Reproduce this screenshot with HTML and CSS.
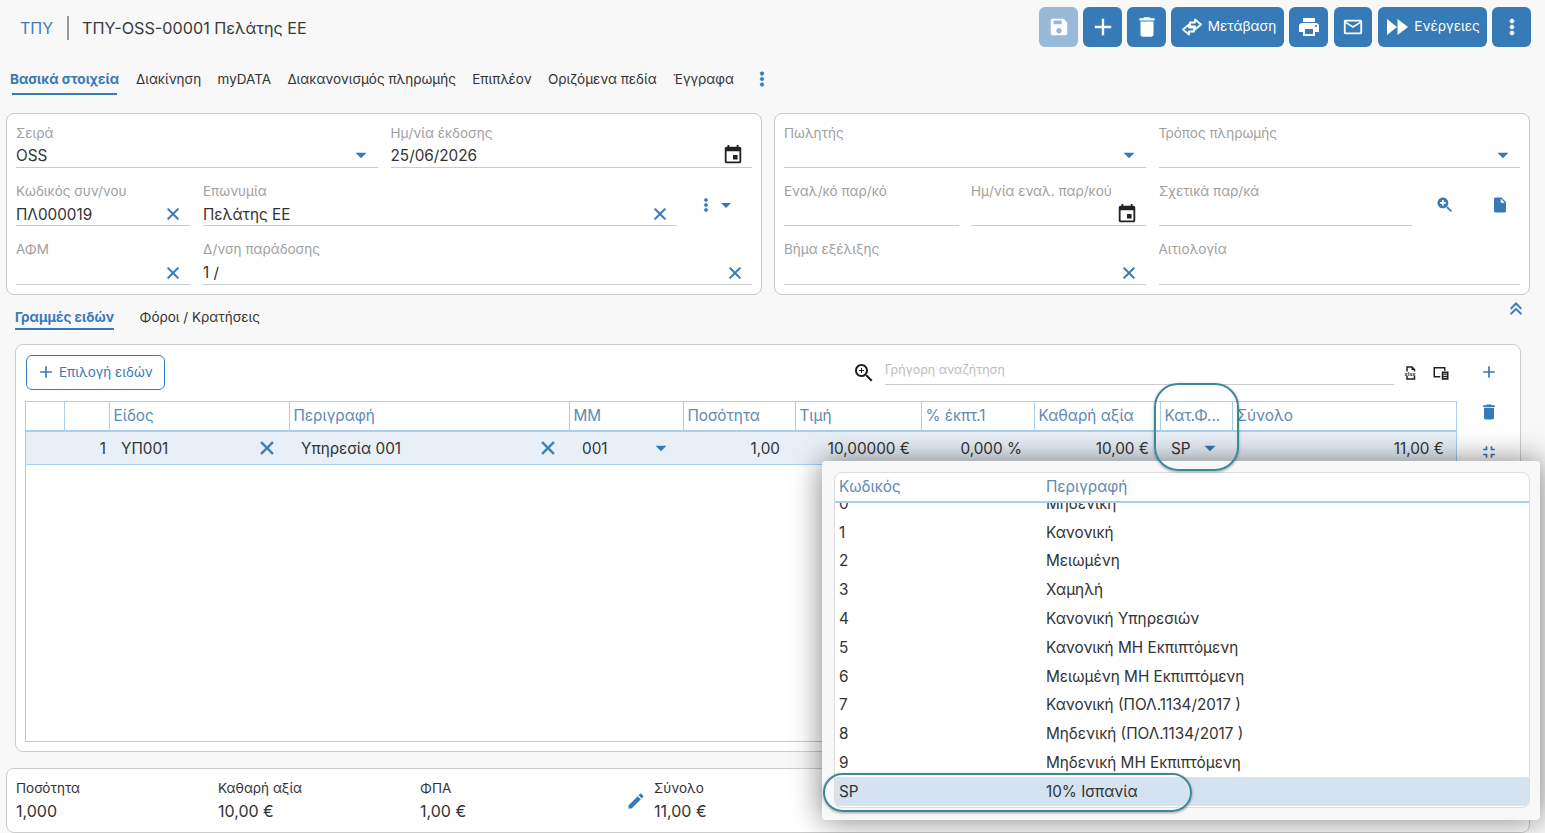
FILE: index.html
```html
<!DOCTYPE html>
<html lang="el">
<head>
  <meta charset="UTF-8">
  <title>ΤΠΥ-OSS-00001 Πελάτης ΕΕ</title>
  <link rel="stylesheet" href="styles.css">
</head>
<body>
  <svg class="sprite" xmlns="http://www.w3.org/2000/svg">
    <symbol id="i-save" viewBox="0 0 24 24"><path d="M17 3H5c-1.11 0-2 .9-2 2v14c0 1.1.89 2 2 2h14c1.1 0 2-.9 2-2V7l-4-4zm-5 16c-1.66 0-3-1.34-3-3s1.34-3 3-3 3 1.34 3 3-1.34 3-3 3zm3-10H6V5h9v4z"/></symbol>
    <symbol id="i-add" viewBox="0 0 24 24"><path d="M19 13h-6v6h-2v-6H5v-2h6V5h2v6h6v2z"/></symbol>
    <symbol id="i-trash" viewBox="0 0 24 24"><path d="M6 19c0 1.1.9 2 2 2h8c1.1 0 2-.9 2-2V7H6v12zM19 4h-3.5l-1-1h-5l-1 1H5v2h14V4z"/></symbol>
    <symbol id="i-swap" viewBox="0 0 20 18"><g fill="none" stroke="currentColor" stroke-width="1.800" stroke-linejoin="round"><path d="M8 4.500h5v-3l6 5-6 5v-3H8z"/><path d="M12 13.500H7v3l-6-5 6-5v3h5z"/></g></symbol>
    <symbol id="i-print" viewBox="0 0 24 24"><path d="M19 8H5c-1.66 0-3 1.34-3 3v6h4v4h12v-4h4v-6c0-1.66-1.34-3-3-3zm-3 11H8v-5h8v5zm3-7c-.55 0-1-.45-1-1s.45-1 1-1 1 .45 1 1-.45 1-1 1zm-1-9H6v4h12V3z"/></symbol>
    <symbol id="i-mail" viewBox="0 0 24 24"><path d="M20 4H4c-1.1 0-1.99.9-1.99 2L2 18c0 1.1.9 2 2 2h16c1.1 0 2-.9 2-2V6c0-1.1-.9-2-2-2zm0 14H4V8l8 5 8-5v10zm-8-7L4 6h16l-8 5z"/></symbol>
    <symbol id="i-forward" viewBox="0 0 24 24"><path d="M2 20l10-8L2 4v16zm10.500-16v16L23 12 12.500 4z"/></symbol>
    <symbol id="i-more" viewBox="0 0 24 24"><path d="M12 8c1.100 0 2-.9 2-2s-.9-2-2-2-2 .9-2 2 .9 2 2 2zm0 2c-1.100 0-2 .9-2 2s.9 2 2 2 2-.9 2-2-.9-2-2-2zm0 6c-1.100 0-2 .9-2 2s.9 2 2 2 2-.9 2-2-.9-2-2-2z" stroke="currentColor" stroke-width=".6"/></symbol>
    <symbol id="i-close" viewBox="0 0 24 24"><path d="M19 6.410L17.590 5 12 10.590 6.410 5 5 6.410 10.590 12 5 17.590 6.410 19 12 13.410 17.590 19 19 17.590 13.410 12z" stroke="currentColor" stroke-width=".7"/></symbol>
    <symbol id="i-caret" viewBox="0 0 24 24"><path d="M6 9.500h12l-6 6z"/></symbol>
    <symbol id="i-event" viewBox="0 0 24 24"><path d="M17 12h-5v5h5v-5zM16 1v2H8V1H6v2H5c-1.110 0-1.990.9-1.990 2L3 19c0 1.100.89 2 2 2h14c1.100 0 2-.9 2-2V5c0-1.100-.9-2-2-2h-1V1h-2zm3 18H5V8h14v11z"/></symbol>
    <symbol id="i-zoom-fill" viewBox="0 0 24 24"><path d="M15.500 14h-.79l-.28-.27C15.410 12.590 16 11.110 16 9.500 16 5.910 13.090 3 9.500 3S3 5.910 3 9.500 5.910 16 9.500 16c1.610 0 3.090-.59 4.230-1.570l.27.28v.79l5 4.990L20.490 19l-4.990-5zM13 10.500h-2.500V13h-2v-2.500H6v-2h2.500V6h2v2.500H13v2z"/></symbol>
    <symbol id="i-zoom" viewBox="0 0 24 24"><path d="M15.500 14h-.79l-.28-.27C15.410 12.590 16 11.110 16 9.500 16 5.910 13.090 3 9.500 3S3 5.910 3 9.500 5.910 16 9.500 16c1.610 0 3.090-.59 4.230-1.570l.27.28v.79l5 4.990L20.490 19l-4.990-5zm-6 0C7.010 14 5 11.990 5 9.500S7.010 5 9.500 5 14 7.010 14 9.500 11.990 14 9.500 14z"/><path d="M12 10h-2v2H9v-2H7V9h2V7h1v2h2v1z"/></symbol>
    <symbol id="i-file" viewBox="0 0 24 24"><path d="M6 2c-1.100 0-1.990.9-1.990 2L4 20c0 1.100.89 2 1.990 2H18c1.100 0 2-.9 2-2V8l-6-6H6zm7 7V3.500L18.500 9H13z"/></symbol>
    <symbol id="i-edit" viewBox="0 0 24 24"><path d="M3 17.250V21h3.750L17.810 9.940l-3.750-3.750L3 17.250zM20.710 7.040c.39-.39.39-1.020 0-1.410l-2.340-2.340c-.39-.39-1.020-.39-1.410 0l-1.830 1.830 3.750 3.750 1.830-1.830z"/></symbol>
    <symbol id="i-double-up" viewBox="0 0 24 24"><path d="M17.590 20L19 18.590l-7-7-7 7L6.410 20 12 14.420 17.590 20zM17.590 13.580L19 12.170l-7-7-7 7 1.410 1.410L12 8l5.590 5.580z" stroke="currentColor" stroke-width=".5"/></symbol>
    <symbol id="i-compress" viewBox="0 0 24 24"><path d="M5 16h3v3h2v-5H5v2zm3-8H5v2h5V5H8v3zm6 11h2v-3h3v-2h-5v5zm2-11V5h-2v5h5V8h-3z"/></symbol>
    <symbol id="i-xlsx" viewBox="0 0 24 24"><path d="M7 3h8l4 4v3h-2V8h-3V5H9v5H7zM7 16h2v3h8v-3h2v5H7z"/><text x="12" y="15.500" text-anchor="middle" font-family="Liberation Sans, sans-serif" font-size="7.500" font-weight="700">xlsx</text></symbol>
    <symbol id="i-copy" viewBox="0 0 24 24"><path d="M2 4h16v5h-2V6H4v10h7v2H2z"/><path d="M13 10h9v11h-9z"/><path fill="#fff" d="M15 12.500h5v1h-5zM15 15h5v1h-5zM15 17.500h5v1h-5z"/></symbol>
  </svg>

  <header class="topbar">
    <div class="crumb">
      <span class="crumb-code">ΤΠΥ</span>
      <span class="crumb-title">ΤΠΥ-OSS-00001 Πελάτης ΕΕ</span>
    </div>
    <div class="actions">
      <button class="btn disabled"><svg class="ico-22"><use href="#i-save"/></svg></button>
      <button class="btn"><svg class="ico-28"><use href="#i-add"/></svg></button>
      <button class="btn"><svg class="ico-26"><use href="#i-trash"/></svg></button>
      <button class="btn wide-go"><svg class="ico-swap"><use href="#i-swap"/></svg><span>Μετάβαση</span></button>
      <button class="btn"><svg class="ico-24"><use href="#i-print"/></svg></button>
      <button class="btn mail"><svg class="ico-22"><use href="#i-mail"/></svg></button>
      <button class="btn wide-act"><svg class="ico-24"><use href="#i-forward"/></svg><span>Ενέργειες</span></button>
      <button class="btn"><svg class="ico-24"><use href="#i-more"/></svg></button>
    </div>
  </header>

  <nav class="tabs">
    <a class="tab active">Βασικά στοιχεία</a>
    <a class="tab">Διακίνηση</a>
    <a class="tab">myDATA</a>
    <a class="tab">Διακανονισμός πληρωμής</a>
    <a class="tab">Επιπλέον</a>
    <a class="tab">Οριζόμενα πεδία</a>
    <a class="tab">Έγγραφα</a>
    <svg class="ico-22 tab-more"><use href="#i-more"/></svg>
  </nav>

  <section class="cards">
    <div class="card">
      <div class="row">
        <div class="field half"><label>Σειρά</label><div class="val top">OSS<svg class="ico-22 blue end"><use href="#i-caret"/></svg></div></div>
        <div class="field half"><label>Ημ/νία έκδοσης</label><div class="val top">25/06/2026<svg class="ico-22 dark end"><use href="#i-event"/></svg></div></div>
      </div>
      <div class="row">
        <div class="field short"><label>Κωδικός συν/νου</label><div class="val low">ΠΛ000019<svg class="ico-20 blue end"><use href="#i-close"/></svg></div></div>
        <div class="field name"><label>Επωνυμία</label><div class="val low">Πελάτης ΕΕ<svg class="ico-20 blue end"><use href="#i-close"/></svg></div></div>
        <div class="field-tools"><svg class="ico-20 blue"><use href="#i-more"/></svg><svg class="ico-20 blue"><use href="#i-caret"/></svg></div>
      </div>
      <div class="row row-last">
        <div class="field short"><label>ΑΦΜ</label><div class="val low"><svg class="ico-20 blue end"><use href="#i-close"/></svg></div></div>
        <div class="field grow"><label>Δ/νση παράδοσης</label><div class="val low">1 /<svg class="ico-20 blue end"><use href="#i-close"/></svg></div></div>
      </div>
    </div>
    <div class="card">
      <div class="row">
        <div class="field half"><label>Πωλητής</label><div class="val top"><svg class="ico-22 blue end"><use href="#i-caret"/></svg></div></div>
        <div class="field half"><label>Τρόπος πληρωμής</label><div class="val top"><svg class="ico-22 blue end"><use href="#i-caret"/></svg></div></div>
      </div>
      <div class="row">
        <div class="field quarter"><label>Εναλ/κό παρ/κό</label><div class="val low"></div></div>
        <div class="field quarter"><label>Ημ/νία εναλ. παρ/κού</label><div class="val low"><svg class="ico-22 dark end"><use href="#i-event"/></svg></div></div>
        <div class="field related"><label>Σχετικά παρ/κά</label><div class="val low"></div></div>
        <div class="field-tools wide"><svg class="ico-20 blue"><use href="#i-zoom-fill"/></svg><svg class="ico-18 blue"><use href="#i-file"/></svg></div>
      </div>
      <div class="row row-last">
        <div class="field half"><label>Βήμα εξέλιξης</label><div class="val low"><svg class="ico-20 blue end"><use href="#i-close"/></svg></div></div>
        <div class="field half"><label>Αιτιολογία</label><div class="val low"></div></div>
      </div>
    </div>
  </section>

  <nav class="subtabs">
    <a class="subtab active">Γραμμές ειδών</a>
    <a class="subtab">Φόροι / Κρατήσεις</a>
    <svg class="ico-20 blue collapse"><use href="#i-double-up"/></svg>
  </nav>

  <section class="lines">
    <div class="lines-main">
      <div class="toolbar">
        <button class="pick"><svg class="ico-20"><use href="#i-add"/></svg><span>Επιλογή ειδών</span></button>
        <svg class="ico-24 dark search-ico"><use href="#i-zoom"/></svg>
        <div class="search">Γρήγορη αναζήτηση</div>
        <svg class="ico-18 dark tool-a"><use href="#i-xlsx"/></svg>
        <svg class="ico-18 dark tool-b"><use href="#i-copy"/></svg>
      </div>
      <div class="grid-wrap">
        <table class="grid">
          <colgroup>
            <col class="c-a"><col class="c-b"><col class="c-item"><col class="c-desc"><col class="c-mm"><col class="c-qty"><col class="c-price"><col class="c-disc"><col class="c-net"><col class="c-vat"><col class="c-total">
          </colgroup>
          <thead>
            <tr><th></th><th></th><th>Είδος</th><th>Περιγραφή</th><th>ΜΜ</th><th>Ποσότητα</th><th>Τιμή</th><th>% έκπτ.1</th><th>Καθαρή αξία</th><th>Κατ.Φ...</th><th>Σύνολο</th></tr>
          </thead>
          <tbody>
            <tr>
              <td></td>
              <td class="num line-no">1</td>
              <td><div class="cell pad-item">ΥΠ001<svg class="ico-22 blue end"><use href="#i-close"/></svg></div></td>
              <td><div class="cell pad-desc">Υπηρεσία 001<svg class="ico-22 blue end"><use href="#i-close"/></svg></div></td>
              <td><div class="cell pad-mm">001<svg class="ico-22 blue end"><use href="#i-caret"/></svg></div></td>
              <td class="num qty">1,00</td>
              <td class="num near">10,00000 €</td>
              <td class="num">0,000 %</td>
              <td class="num near">10,00 €</td>
              <td><div class="cell pad-vat">SP<svg class="ico-22 blue end"><use href="#i-caret"/></svg></div></td>
              <td class="num">11,00 €</td>
            </tr>
          </tbody>
        </table>
      </div>
    </div>
    <div class="lines-side">
      <svg class="ico-20 blue"><use href="#i-add"/></svg>
      <svg class="ico-20 blue"><use href="#i-trash"/></svg>
      <svg class="ico-20 blue"><use href="#i-compress"/></svg>
    </div>
  </section>

  <footer class="totals">
    <div class="total"><span>Ποσότητα</span><strong>1,000</strong></div>
    <div class="total"><span>Καθαρή αξία</span><strong>10,00 €</strong></div>
    <div class="total vat"><span>ΦΠΑ</span><strong>1,00 €</strong></div>
    <svg class="ico-20 blue pencil"><use href="#i-edit"/></svg>
    <div class="total"><span>Σύνολο</span><strong>11,00 €</strong></div>
  </footer>

  <div class="popup">
    <div class="picker">
      <div class="picker-head"><span>Κωδικός</span><span>Περιγραφή</span></div>
      <div class="picker-body">
        <div class="picker-list">
          <div class="opt"><span>0</span><span>Μηδενική</span></div>
          <div class="opt"><span>1</span><span>Κανονική</span></div>
          <div class="opt"><span>2</span><span>Μειωμένη</span></div>
          <div class="opt"><span>3</span><span>Χαμηλή</span></div>
          <div class="opt"><span>4</span><span>Κανονική Υπηρεσιών</span></div>
          <div class="opt"><span>5</span><span>Κανονική ΜΗ Εκπιπτόμενη</span></div>
          <div class="opt"><span>6</span><span>Μειωμένη ΜΗ Εκπιπτόμενη</span></div>
          <div class="opt"><span>7</span><span>Κανονική (ΠΟΛ.1134/2017 )</span></div>
          <div class="opt"><span>8</span><span>Μηδενική (ΠΟΛ.1134/2017 )</span></div>
          <div class="opt"><span>9</span><span>Μηδενική ΜΗ Εκπιπτόμενη</span></div>
          <div class="opt selected"><span>SP</span><span>10% Ισπανία</span></div>
        </div>
      </div>
    </div>
  </div>

  <div class="callout callout-col"></div>
  <div class="callout callout-row"></div>
</body>
</html>
```

FILE: styles.css
```css
* {
  box-sizing: border-box;
}
html, body {
  margin: 0;
  height: 833px;
  overflow: hidden;
}
body {
  position: relative;
  background: #f8f8f8;
  color: #333;
  font-family: Inter, "Noto Sans", sans-serif;
  font-size: 15.3px;
}
.sprite {
  display: none;
}
svg {
  fill: currentColor;
  flex: none;
}
.ico-18 { width: 18px; height: 18px; }
.ico-20 { width: 20px; height: 20px; }
.ico-22 { width: 22px; height: 22px; }
.ico-24 { width: 24px; height: 24px; }
.ico-26 { width: 26px; height: 26px; }
.ico-28 { width: 28px; height: 28px; }
.ico-swap { width: 20px; height: 18px; }
.blue { color: #377ab8; }
.dark { color: #222; }
.end { margin-left: auto; }

/* top bar */
.topbar {
  display: flex;
  justify-content: space-between;
  height: 47px;
  padding: 7px 14px 0 20px;
}
.crumb {
  display: flex;
  align-items: center;
  height: 42px;
}
.crumb-code {
  color: #3f7cb5;
  font-size: 16px;
  padding-right: 14px;
  border-right: 2px solid #999;
  line-height: 24px;
}
.crumb-title {
  font-size: 16.2px;
  color: #3a3a3a;
  padding-left: 13px;
}
.actions {
  display: flex;
  gap: 5px;
}
.btn {
  display: flex;
  align-items: center;
  justify-content: center;
  gap: 5px;
  width: 39px;
  height: 40px;
  padding: 0;
  border: 0;
  border-radius: 6px;
  background: #377ab8;
  color: #fff;
  font: 13.6px Inter, sans-serif;
}
.btn span {
  padding-bottom: 2px;
}
.btn.disabled {
  background: #98b9d8;
}
.btn.wide-go { width: 113px; gap: 6px; padding-left: 3px; }
.btn.wide-act { width: 109px; margin-left: 1px; }
.btn.mail { width: 38px; margin-left: 1px; }

/* tabs */
.tabs {
  display: flex;
  align-items: flex-start;
  gap: 16.3px;
  height: 30px;
  margin: 18px 0 18px 10px;
}
.tab {
  font-size: 13.5px;
  line-height: 28px;
  color: #333;
  white-space: nowrap;
}
.tab.active {
  height: 30px;
  margin-right: 0.7px;
  color: #377ab8;
  font-weight: 700;
  background: linear-gradient(#377ab8, #377ab8) no-repeat 2px 100% / calc(100% - 4px) 2px;
}
.tab-more {
  color: #377ab8;
  margin: 3px 0 0 1px;
}

/* header cards */
.cards {
  display: flex;
  gap: 12px;
  padding-left: 6px;
}
.card {
  width: 756px;
  height: 182px;
  padding: 10px 9px 0;
  background: #fff;
  border: 1px solid #ccc;
  border-radius: 8px;
}
.row {
  display: flex;
  gap: 13px;
  height: 44px;
  margin-bottom: 14px;
}
.row-last {
  height: 45px;
  margin-bottom: 0;
}
.field {
  min-width: 0;
}
.field label {
  display: block;
  height: 18px;
  font-size: 13.5px;
  line-height: 18px;
  color: #a0a0a0;
  white-space: nowrap;
}
.val {
  display: flex;
  align-items: center;
  height: 26px;
  border-bottom: 1px solid #ccc;
  white-space: nowrap;
}
.val.top {
  padding-top: 1px;
}
.val.low {
  padding-top: 3px;
}
.row-last .val {
  height: 27px;
}
.half { width: 362px; }
.short { width: 174px; }
.name { width: 474px; }
.grow { flex: 1; }
.quarter { width: 175px; }
.quarter + .quarter { margin-left: -1px; }
.related { width: 253px; }
.val .ico-20.end { margin-right: 7px; }
.val .ico-22.end { margin-right: 6px; }
.val .dark.end { margin-right: 8px; }
.field-tools {
  display: flex;
  align-items: center;
  margin: 8px 0 0 6px;
  height: 30px;
}
.field-tools.wide {
  gap: 36px;
  margin-left: 10px;
}

/* sub tabs */
.subtabs {
  display: flex;
  align-items: flex-start;
  gap: 25.5px;
  height: 25px;
  margin: 10px 15px 14px 15px;
}
.subtab {
  font-size: 13.5px;
  line-height: 24px;
  color: #333;
}
.subtab.active {
  height: 25px;
  color: #377ab8;
  font-weight: 700;
  border-bottom: 2px solid #377ab8;
}
.collapse {
  margin: -7px 4px 0 auto;
}

/* item lines */
.lines {
  display: flex;
  width: 1506px;
  height: 408px;
  margin-left: 15px;
  padding: 10px 0 0 9px;
  background: #fff;
  border: 1px solid #ccc;
  border-radius: 8px;
}
.lines-main {
  width: 1432px;
}
.toolbar {
  display: flex;
  align-items: center;
  height: 35px;
  margin-bottom: 11px;
  padding-left: 1px;
}
.pick {
  display: flex;
  align-items: center;
  gap: 3px;
  width: 139px;
  height: 35px;
  padding: 0 0 1px 9px;
  background: #fff;
  border: 1px solid #377ab8;
  border-radius: 6px;
  color: #377ab8;
  font: 13.5px Inter, sans-serif;
}
.search-ico {
  margin-left: auto;
}
.search {
  align-self: flex-start;
  width: 509px;
  height: 27px;
  margin: 3px 7px 0 9px;
  border-bottom: 1px solid #ccc;
  font-size: 12.5px;
  line-height: 24px;
  color: #bdbdbd;
}
.tool-b {
  margin: 0 7px 0 13px;
}
.grid-wrap {
  height: 341px;
  border: 1px solid #a9cfee;
}
.grid {
  width: 1430px;
  table-layout: fixed;
  border-collapse: collapse;
}
.c-a { width: 38px; }
.c-b { width: 45px; }
.c-item { width: 180px; }
.c-desc { width: 280px; }
.c-mm { width: 114px; }
.c-qty { width: 112px; }
.c-price { width: 126px; }
.c-disc { width: 113px; }
.c-net { width: 126px; }
.c-vat { width: 72px; }
.grid th {
  height: 29px;
  padding: 0 3px 2px 4px;
  border-right: 1px solid #a9cfee;
  border-bottom: 2px solid #a9cfee;
  font-size: 15.3px;
  font-weight: 400;
  color: #5c8bb5;
  text-align: left;
  white-space: nowrap;
}
.grid th:last-child {
  border-right: 0;
}
.grid td {
  height: 33px;
  padding: 1px 0 0;
  background: #e8eff7;
  border-bottom: 1px solid #a9cfee;
  font-size: 15.3px;
  white-space: nowrap;
}
.grid td.num {
  padding-right: 12px;
  text-align: right;
}
.grid td.near {
  padding-right: 11px;
}
.grid td.line-no {
  padding-right: 3px;
}
.grid td.qty {
  padding-right: 15px;
}
.cell {
  display: flex;
  align-items: center;
}
.pad-item { padding: 0 11px 0 12px; }
.pad-desc { padding: 0 10px 0 12px; }
.pad-mm { padding: 0 11px 0 13px; }
.pad-vat { padding: 0 11px 0 11px; }
.lines-side {
  display: flex;
  flex-direction: column;
  align-items: center;
  gap: 20px;
  width: 73px;
  padding-top: 7px;
}

/* totals */
.totals {
  display: flex;
  align-items: center;
  width: 1524px;
  height: 65px;
  margin: 16px 0 0 6px;
  padding-left: 9px;
  background: #fff;
  border: 1px solid #ccc;
  border-radius: 8px;
}
.total {
  display: flex;
  flex-direction: column;
  width: 202px;
}
.total.vat {
  width: 206px;
}
.total span {
  font-size: 13.5px;
  line-height: 20px;
}
.total strong {
  font-size: 16px;
  font-weight: 400;
  line-height: 26px;
}
.pencil {
  margin-right: 8px;
}

/* dropdown over the grid */
.popup {
  position: absolute;
  left: 822px;
  top: 461px;
  width: 718px;
  height: 359px;
  padding: 11px 10px 0 12px;
  background: #f8f8f8;
  border-radius: 4px;
  box-shadow: 0 0 30px rgba(0, 0, 0, 0.5);
}
.picker {
  height: 336px;
  background: #fff;
  border: 1px solid #ddd;
  border-radius: 8px;
  overflow: hidden;
}
.picker-head {
  display: flex;
  height: 30px;
  border-bottom: 2px solid #a9cfee;
  font-size: 15.3px;
  line-height: 28px;
  color: #5c8bb5;
}
.picker-head span:first-child,
.opt span:first-child {
  width: 211px;
  padding-left: 4px;
}
.picker-body {
  height: 305px;
  overflow: hidden;
}
.picker-list {
  margin-top: -14px;
}
.opt {
  display: flex;
  align-items: center;
  height: 28.8px;
  font-size: 15.3px;
}
.opt.selected {
  background: #d5e3f0;
}
.callout {
  position: absolute;
  border: 2px solid #3a8a96;
  box-shadow: 0 1px 3px rgba(0, 0, 0, 0.35);
}
.callout-col {
  left: 1154px;
  top: 383px;
  width: 85px;
  height: 88px;
  border-radius: 24px;
}
.callout-row {
  left: 823px;
  top: 773px;
  width: 369px;
  height: 39px;
  border-radius: 20px;
}
```
